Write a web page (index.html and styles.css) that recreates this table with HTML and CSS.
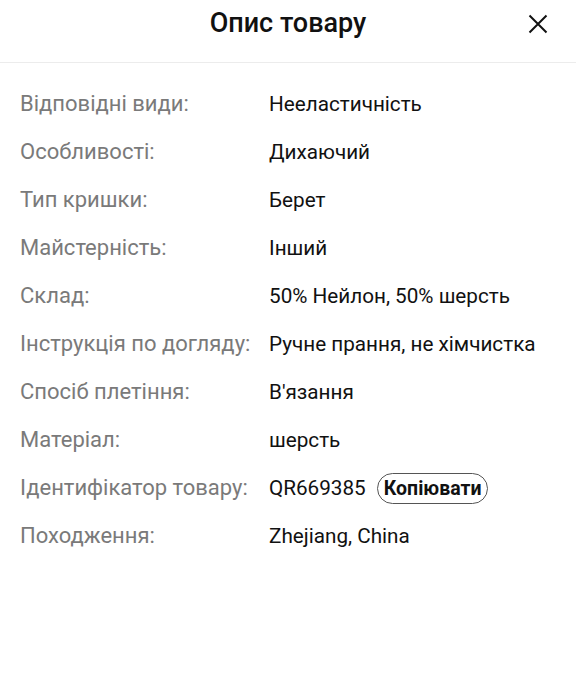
FILE: index.html
```html
<!DOCTYPE html>
<html lang="uk">
<head>
<meta charset="utf-8">
<link rel="stylesheet" href="styles.css">
</head>
<body>
<div class="sheet">
  <header class="head">
    <h1 class="title">Опис товару</h1>
    <button class="close" aria-label="Закрити">
      <svg width="20" height="20" viewBox="0 0 20 20"><path d="M1.5 1.5 L18.5 18.5 M18.5 1.5 L1.5 18.5" stroke="#111" stroke-width="2" fill="none"/></svg>
    </button>
  </header>
  <div class="props">
    <div class="row"><span class="lbl">Відповідні види:</span><span class="val">Нееластичність</span></div>
    <div class="row"><span class="lbl">Особливості:</span><span class="val">Дихаючий</span></div>
    <div class="row"><span class="lbl">Тип кришки:</span><span class="val">Берет</span></div>
    <div class="row"><span class="lbl">Майстерність:</span><span class="val">Інший</span></div>
    <div class="row"><span class="lbl">Склад:</span><span class="val">50% Нейлон, 50% шерсть</span></div>
    <div class="row"><span class="lbl">Інструкція по догляду:</span><span class="val">Ручне прання, не хімчистка</span></div>
    <div class="row"><span class="lbl">Спосіб плетіння:</span><span class="val">В'язання</span></div>
    <div class="row"><span class="lbl">Матеріал:</span><span class="val">шерсть</span></div>
    <div class="row"><span class="lbl">Ідентифікатор товару:</span><span class="val">QR669385 <button class="copy">Копіювати</button></span></div>
    <div class="row"><span class="lbl">Походження:</span><span class="val">Zhejiang, China</span></div>
  </div>
</div>
</body>
</html>
```
FILE: styles.css
```css
html, body {
  margin: 0;
  padding: 0;
  background: #fff;
}
body {
  font-family: Roboto, "Noto Sans", sans-serif;
  color: #111;
}
.sheet {
  width: 576px;
}
.head {
  height: 62px;
  border-bottom: 1px solid #ececec;
  display: flex;
  align-items: center;
  justify-content: center;
  position: relative;
}
.title {
  margin: 0;
  font-size: 27px;
  font-weight: 500;
  line-height: 1;
  margin-top: -15px;
  color: #111;
}
.close {
  position: absolute;
  right: 27px;
  top: 13px;
  width: 22px;
  height: 22px;
  padding: 0;
  border: 0;
  background: none;
  display: flex;
  align-items: center;
  justify-content: center;
}
.props {
  padding: 25px 0 0 20px;
  display: flex;
  flex-direction: column;
}
.row {
  display: grid;
  grid-template-columns: 249px 1fr;
  height: 48px;
  align-items: start;
  line-height: 32px;
}
.lbl {
  color: #7a7a7a;
  font-size: 22px;
}
.val {
  color: #111;
  font-size: 20.7px;
  display: flex;
  align-items: center;
  gap: 11px;
}
.copy {
  font-family: Roboto, sans-serif;
  font-size: 19.5px;
  font-weight: 700;
  color: #111;
  background: #fff;
  border: 1px solid #555;
  border-radius: 16px;
  height: 31px;
  padding: 0 6px;
  line-height: 29px;
}
```
